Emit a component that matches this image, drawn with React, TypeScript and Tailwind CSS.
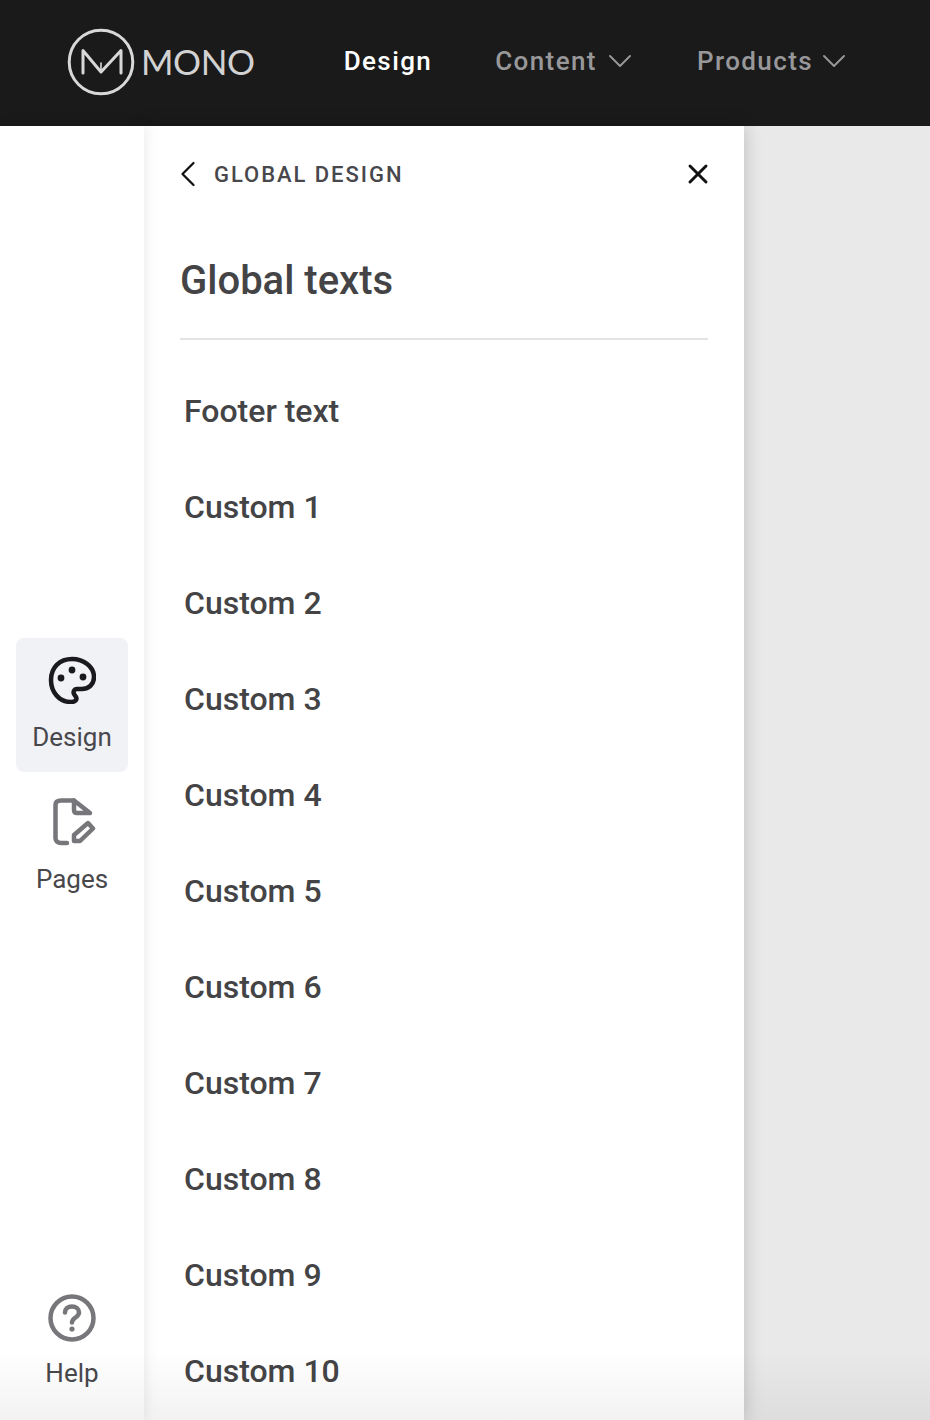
import { ChevronDown, ChevronLeft, X } from 'lucide-react';

const rows = [
  'Footer text',
  'Custom 1',
  'Custom 2',
  'Custom 3',
  'Custom 4',
  'Custom 5',
  'Custom 6',
  'Custom 7',
  'Custom 8',
  'Custom 9',
  'Custom 10',
];

function Logo() {
  return (
    <div className="mt-[-2px] flex items-center">
      <svg width="68" height="68" viewBox="0 0 68 68" fill="none" stroke="#d8d8d8" strokeWidth="3" strokeLinejoin="round" strokeLinecap="round">
        <circle cx="34" cy="34" r="31.800" />
        <path d="M16 45V22.500L34 44L54 22.500V45" />
        <path d="M34 35V44" strokeWidth="1.600" />
      </svg>
      <span className="mb-[2px] ml-[6px] font-['Lato',sans-serif] text-[35px] font-normal leading-none tracking-[-0.4px] text-[#d2d2d2]">
        MONO
      </span>
    </div>
  );
}

function Header() {
  return (
    <header className="flex h-[126px] items-center bg-[#1a1a1a] pl-[67px]">
      <Logo />
      <nav className="ml-[89px] mt-[-4px] flex items-center text-[26px] font-medium tracking-[1.4px]">
        <span className="text-white">Design</span>
        <span className="ml-[63px] flex items-center text-[#98989b]">
          Content
          <ChevronDown size={40} strokeWidth={1.150} className="my-[-8px] ml-[3px]" />
        </span>
        <span className="ml-[57px] flex items-center text-[#98989b]">
          Products
          <ChevronDown size={40} strokeWidth={1.150} className="my-[-8px] ml-[1px]" />
        </span>
      </nav>
    </header>
  );
}

function PaletteIcon() {
  return (
    <svg width="48" height="48" viewBox="0 0 48 48" fill="none" stroke="#1a1a1c" strokeWidth="4.500" strokeLinejoin="round">
      <path d="M23 46C11 46 3 36 3 24C3 11 12 3 24 3C36 3 46 11 46 21C46 28 41 33 34 33H29C26 33 25 36 26 38L28 41C29.500 44 27 46 23 46Z" />
      <circle cx="13" cy="22" r="3.400" fill="#1a1a1c" stroke="none" />
      <circle cx="24" cy="14" r="3.400" fill="#1a1a1c" stroke="none" />
      <circle cx="35" cy="21" r="3.400" fill="#1a1a1c" stroke="none" />
    </svg>
  );
}

function PagesIcon() {
  return (
    <svg width="48" height="48" viewBox="0 0 48 48" fill="none" stroke="#77777b" strokeWidth="4.500" strokeLinejoin="round" strokeLinecap="round">
      <path d="M19 45H13C9.500 45 7.500 43 7.500 40V7C7.500 4 9.500 2.500 13 2.500H26" />
      <path d="M26 2.500L42 15H29C27 15 26 14 26 12Z" />
      <path d="M26 43V37L40 25L45 30.500L32 43Z" />
    </svg>
  );
}

function HelpIcon() {
  return (
    <svg width="48" height="48" viewBox="0 0 48 48" fill="none" stroke="#77777b" strokeWidth="4.500" strokeLinecap="round">
      <circle cx="24" cy="24" r="21.500" />
      <path d="M17 18.500C17 14.500 20 12.500 24 12.500C28 12.500 31 15 31 18.500C31 23.500 24 23.500 24 28.500" />
      <circle cx="24" cy="35" r="2.600" fill="#77777b" stroke="none" />
    </svg>
  );
}

function SideItem({ icon, label, active, tight }: { icon: React.ReactNode; label: string; active?: boolean; tight?: boolean }) {
  return (
    <div className={`flex h-[134px] w-[112px] flex-col items-center rounded-[8px] pt-[18px] ${active ? 'bg-[#f1f2f6]' : ''}`}>
      {icon}
      <span className={`${tight ? 'mt-[11px]' : 'mt-[13px]'} text-[26px] leading-[40px] text-[#48484c]`}>{label}</span>
    </div>
  );
}

export default function App() {
  return (
    <div className="relative flex h-[1420px] w-[930px] flex-col overflow-hidden bg-[#e9e9e9] font-['Roboto',sans-serif]">
      <Header />
      <div className="flex min-h-0 flex-1">
        <aside className="relative z-10 flex w-[144px] flex-col items-center bg-white pb-[10px] pt-[512px] shadow-[0_0_14px_rgba(0,0,0,0.1)]">
          <SideItem icon={<PaletteIcon />} label="Design" active />
          <div className="mt-[8px]">
            <SideItem icon={<PagesIcon />} label="Pages" />
          </div>
          <div className="mt-auto">
            <SideItem icon={<HelpIcon />} label="Help" tight />
          </div>
        </aside>
        <main className="relative w-[600px] bg-white px-[36px] shadow-[0_0_18px_rgba(0,0,0,0.2)]">
          <div className="flex h-[96px] items-center justify-between">
            <div className="flex items-center">
              <ChevronLeft size={44} strokeWidth={1.250} className="ml-[-14px] text-[#111]" />
              <span className="ml-[4px] text-[22px] font-medium tracking-[1.95px] text-[#48484c]">GLOBAL DESIGN</span>
            </div>
            <X size={32} strokeWidth={2.200} className="mr-[-6px] text-[#111]" />
          </div>
          <h1 className="mt-[11px] h-[107px] border-b-2 border-[#e4e4e6] text-[40px] font-medium leading-[96px] text-[#444446]">
            Global texts
          </h1>
          <ul className="mt-[23px] pl-[4px]">
            {rows.map((row) => (
              <li key={row} className="flex h-[96px] items-center text-[32px] font-medium text-[#444446]">
                {row}
              </li>
            ))}
          </ul>
        </main>
      </div>
      <div className="pointer-events-none absolute bottom-0 left-0 z-20 h-[70px] w-full bg-gradient-to-b from-transparent to-black/5" />
    </div>
  );
}
